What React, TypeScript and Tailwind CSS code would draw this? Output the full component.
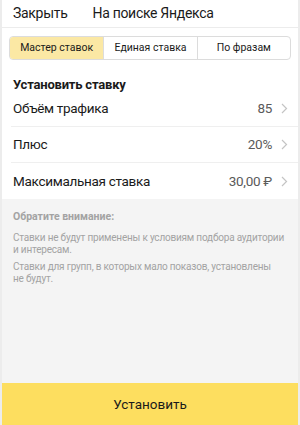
function Chevron() {
  return (
    <svg width="7" height="11" viewBox="0 0 7 11" className="ml-[9px] shrink-0">
      <path d="M1 1l4.5 4.5L1 10" fill="none" stroke="#c4c4c4" strokeWidth="1.2" />
    </svg>
  );
}

const rows = [
  { label: "Объём трафика", value: "85" },
  { label: "Плюс", value: "20%" },
  { label: "Максимальная ставка", value: "30,00 ₽" },
];

export default function App() {
  return (
    <main className="flex h-[425px] w-[300px] flex-col overflow-hidden border-x-2 border-[#ececec] bg-white font-['Roboto',sans-serif] text-[#1a1a1a]">
      <header className="flex h-[28px] items-center border-b border-[#ececec] text-[14px] tracking-[-0.3px]">
        <span className="pl-[11px]">Закрыть</span>
        <span className="pl-[25px]">На поиске Яндекса</span>
      </header>

      <div className="px-[7px] pt-[8px]">
        <div className="grid h-[24px] grid-cols-3 overflow-hidden rounded-[4px] border border-[#dcdcdc] text-[10.5px]">
          <div className="flex items-center justify-center bg-[#fbe8a4]">Мастер ставок</div>
          <div className="flex items-center justify-center border-l border-[#dcdcdc]">Единая ставка</div>
          <div className="flex items-center justify-center border-l border-[#dcdcdc]">По фразам</div>
        </div>
      </div>

      <section className="pt-[19px]">
        <h2 className="pl-[11px] text-[13px] font-bold leading-[12px] tracking-[-0.2px]">Установить ставку</h2>
        <div className="pl-[9px]">
          {rows.map((r, i) => (
            <div
              key={r.label}
              className={`flex h-[36px] items-center pr-[10px] text-[13.5px] tracking-[-0.3px] ${i < rows.length - 1 ? "border-b border-[#efefef]" : ""}`}
            >
              <span className="pl-[2px]">{r.label}</span>
              <span className="ml-auto text-[#5a5a5a]">{r.value}</span>
              <Chevron />
            </div>
          ))}
        </div>
      </section>

      <section className="flex-1 bg-[#f4f4f4] pl-[11px] pr-[6px] pt-[12px] text-[10px] leading-[12.5px] tracking-[-0.2px] text-[#a3a3a3]">
        <p className="mb-[8px] text-[10.5px] font-bold tracking-normal">Обратите внимание:</p>
        <p className="mb-[4px]">
          Ставки не будут применены к условиям подбора аудитории
          <br />и интересам.
        </p>
        <p>
          Ставки для групп, в которых мало показов, установлены
          <br />не будут.
        </p>
      </section>

      <button className="h-[42px] shrink-0 bg-[#fdde5f] text-[13.5px] text-[#1a1a1a]">Установить</button>
    </main>
  );
}
